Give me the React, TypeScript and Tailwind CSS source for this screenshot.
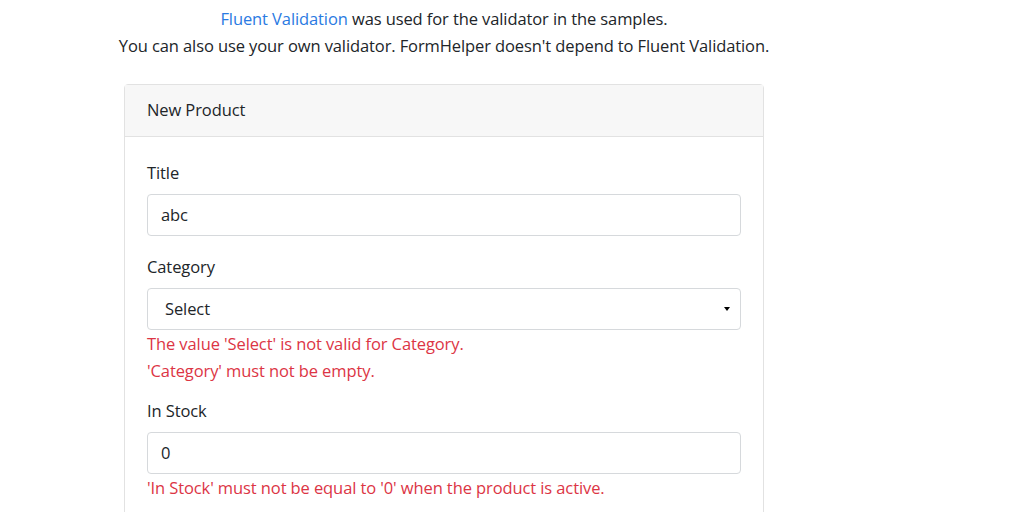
import React from 'react';

const FONT = { fontFamily: '"Open Sans", "Noto Sans", sans-serif' };

export default function App() {
  return (
    <div className="h-[512px] w-[1024px] overflow-hidden bg-white text-[#212529]" style={FONT}>
      {/* Intro text */}
      <div className="w-[888px] pt-[5px] text-center text-[16.5px] leading-[27px] tracking-[-0.1px]">
        <p>
          <a href="#" className="text-[#2a7ae2]">Fluent Validation</a> was used for the validator in the samples.
        </p>
        <p className="-mx-[40px]">You can also use your own validator. FormHelper doesn't depend to Fluent Validation.</p>
      </div>

      {/* Card */}
      <div className="ml-[124px] mt-[25px] w-[640px] rounded-[4px] border border-[#e2e2e2]">
        <div className="flex h-[52px] items-center border-b border-[#e2e2e2] bg-[#f7f7f7] px-[22px] text-[16.5px] tracking-[-0.1px]">
          New Product
        </div>
        <div className="px-[22px] pb-[40px] pt-[24px] text-[16.5px] tracking-[-0.1px]">
          <Field label="Title" value="abc" />
          <div className="mt-[19px]">
            <label className="block leading-[24px]">Category</label>
            <div className="mt-[9px] flex h-[42px] items-center justify-between rounded-[4px] border border-[#d6d9dc] pl-[17px] pr-[10px]">
              <span>Select</span>
              <span className="h-0 w-0 border-x-[3px] border-t-[4px] border-x-transparent border-t-black" />
            </div>
            <p className="leading-[27px] text-[#dc3545]">The value 'Select' is not valid for Category.</p>
            <p className="leading-[27px] text-[#dc3545]">'Category' must not be empty.</p>
          </div>
          <div className="mt-[15px]">
            <Field label="In Stock" value="0" />
            <p className="leading-[27px] text-[#dc3545]">'In Stock' must not be equal to '0' when the product is active.</p>
          </div>
        </div>
      </div>
    </div>
  );
}

function Field({ label, value }: { label: string; value: string }) {
  return (
    <div>
      <label className="block leading-[24px]">{label}</label>
      <div className="mt-[9px] flex h-[42px] items-center rounded-[4px] border border-[#d6d9dc] px-[13px]">
        {value}
      </div>
    </div>
  );
}
